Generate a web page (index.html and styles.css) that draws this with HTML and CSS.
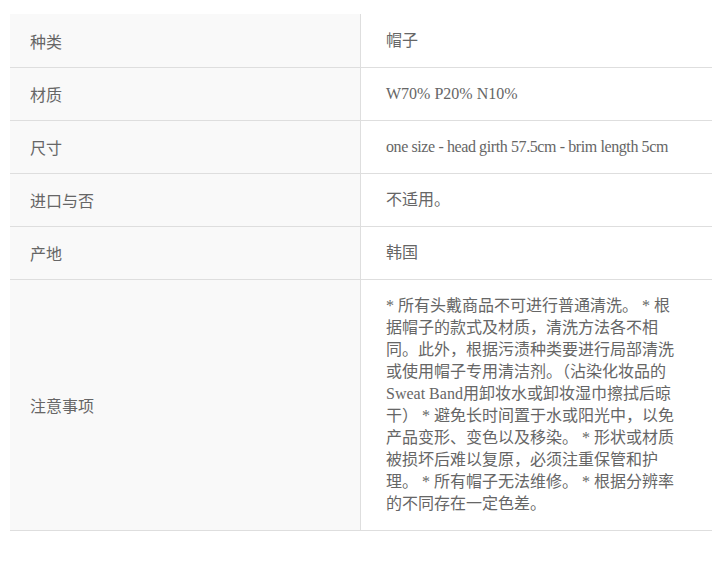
FILE: index.html
```html
<!DOCTYPE html>
<html lang="zh-CN">
<head>
<meta charset="utf-8">
<title>商品信息</title>
<link rel="stylesheet" href="styles.css">
</head>
<body>
<div class="page">
  <table class="info">
    <tbody>
      <tr><th>种类</th><td>帽子</td></tr>
      <tr><th>材质</th><td>W70% P20% N10%</td></tr>
      <tr><th>尺寸</th><td class="tight">one size - head girth 57.5cm - brim length 5cm</td></tr>
      <tr><th>进口与否</th><td>不适用。</td></tr>
      <tr><th>产地</th><td>韩国</td></tr>
      <tr><th>注意事项</th><td class="notes">* 所有头戴商品不可进行普通清洗。 * 根据帽子的款式及材质，清洗方法各不相同。此外，根据污渍种类要进行局部清洗或使用帽子专用清洁剂。（沾染化妆品的Sweat Band用卸妆水或卸妆湿巾擦拭后晾干） * 避免长时间置于水或阳光中，以免产品变形、变色以及移染。 * 形状或材质被损坏后难以复原，必须注重保管和护理。 * 所有帽子无法维修。 * 根据分辨率的不同存在一定色差。</td></tr>
    </tbody>
  </table>
</div>
</body>
</html>
```

FILE: styles.css
```css
html, body {
  margin: 0;
  padding: 0;
  background: #ffffff;
}

.page {
  padding: 14px 9px 0 10px;
}

.info {
  width: 702px;
  border-collapse: collapse;
  border-spacing: 0;
  font-family: "Liberation Serif", "Noto Sans CJK SC", serif;
  font-size: 16px;
  line-height: 22px;
  color: #666666;
}

.info tr {
  border-bottom: 1px solid #dedede;
}

.info th {
  width: 310px;
  padding: 15px 20px;
  background: #f9f9f9;
  border-right: 1px solid #dedede;
  font-weight: normal;
  text-align: left;
  vertical-align: middle;
  font-family: "Noto Sans CJK SC", sans-serif;
}

.info td {
  padding: 15px 32px 15px 25px;
  text-align: left;
  vertical-align: middle;
}

.info tr:first-child th,
.info tr:first-child td {
  padding-top: 16px;
}

.info td.tight {
  letter-spacing: -0.4px;
  white-space: nowrap;
}
```
